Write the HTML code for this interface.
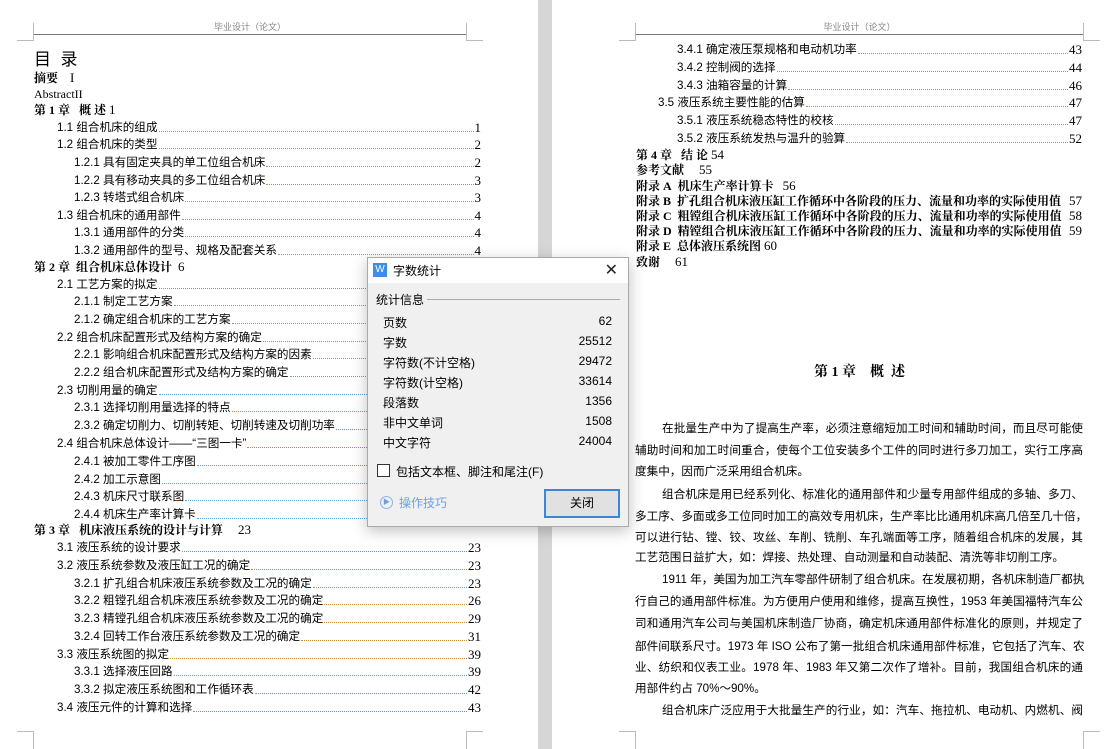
<!DOCTYPE html>
<html><head><meta charset="utf-8">
<style>
*{margin:0;padding:0;box-sizing:border-box}
body{width:1114px;height:749px;overflow:hidden;background:#fff;position:relative;font-family:"Liberation Serif","Noto Serif CJK SC","Noto Sans CJK SC",serif;color:#000}
.gap{position:absolute;left:538px;top:0;width:14px;height:749px;background:#d6d6d6}
.hd{position:absolute;top:20px;font-size:9px;color:#888;font-family:"Liberation Sans","Noto Sans CJK SC",sans-serif;text-align:center}
.hl{position:absolute;top:34px;height:1px;background:#777}
.cm{position:absolute;border-color:#bbb;border-style:solid;border-width:0}
.r{position:absolute;display:flex;align-items:flex-end;font-size:11.6px;line-height:16px;height:16px;white-space:nowrap;font-family:"Liberation Sans","Noto Sans CJK SC",sans-serif}
.r .d{flex:1;border-bottom:1px dotted #c98a3a;margin:0 1px 4px 1px}
.r .d.b{border-bottom-color:#5aa0d8}
.r .n{font-family:"Liberation Serif",serif;font-size:13px}
.c{position:absolute;font-size:12px;line-height:16px;font-weight:bold;white-space:nowrap;font-family:"Liberation Serif","Noto Serif CJK SC",serif}
.c .n{font-weight:normal;font-size:13px}
.bl{position:absolute;left:635px;width:448px;font-size:11.6px;line-height:18px;white-space:nowrap;text-align:justify;text-align-last:justify;font-family:"Liberation Sans","Noto Sans CJK SC",sans-serif}
.bl.e{text-align-last:left}
.bl.i{padding-left:27px}
.dlg{position:absolute;left:367px;top:257px;width:262px;height:270px;background:#f0f0f0;border:1px solid #aaa;box-shadow:0 4px 14px rgba(0,0,0,.25);font-family:"Liberation Sans","Noto Sans CJK SC",sans-serif;font-size:12px}
.tb{height:25px;background:#fff;position:relative}
.dr{position:absolute;left:15px;right:16px;display:flex;justify-content:space-between;font-size:12px}
</style></head><body>
<div class="gap"></div>

<div class="hd" style="left:34px;width:432px">毕业设计（论文）</div>
<div class="hl" style="left:34px;width:432px"></div>
<div class="cm" style="left:17px;top:23px;width:17px;height:18px;border-right-width:1px;border-bottom-width:1px"></div>
<div class="cm" style="left:466px;top:23px;width:17px;height:18px;border-left-width:1px;border-bottom-width:1px"></div>
<div class="cm" style="left:17px;top:731px;width:17px;height:18px;border-right-width:1px;border-top-width:1px"></div>
<div class="cm" style="left:466px;top:731px;width:17px;height:18px;border-left-width:1px;border-top-width:1px"></div>

<div style="position:absolute;left:34px;top:45px;font-size:17px;font-family:'Liberation Sans','Noto Sans CJK SC',sans-serif">目&nbsp;&nbsp;录</div>
<div class="c" style="left:34px;top:70px">摘要&nbsp;&nbsp;&nbsp;&nbsp;<span class="n">I</span></div>
<div class="c" style="left:34px;top:86px;font-weight:normal">AbstractII</div>
<div class="c" style="left:34px;top:102px">第 1 章&nbsp;&nbsp;&nbsp;概 述 <span class="n">1</span></div>

<div class="r" style="left:57px;width:424px;top:120px"><span>1.1 组合机床的组成</span><span class="d b"></span><span class="n">1</span></div>
<div class="r" style="left:57px;width:424px;top:137px"><span>1.2 组合机床的类型</span><span class="d"></span><span class="n">2</span></div>
<div class="r" style="left:74px;width:407px;top:155px"><span>1.2.1 具有固定夹具的单工位组合机床</span><span class="d b"></span><span class="n">2</span></div>
<div class="r" style="left:74px;width:407px;top:173px"><span>1.2.2 具有移动夹具的多工位组合机床</span><span class="d"></span><span class="n">3</span></div>
<div class="r" style="left:74px;width:407px;top:190px"><span>1.2.3 转塔式组合机床</span><span class="d b"></span><span class="n">3</span></div>
<div class="r" style="left:57px;width:424px;top:208px"><span>1.3 组合机床的通用部件</span><span class="d"></span><span class="n">4</span></div>
<div class="r" style="left:74px;width:407px;top:225px"><span>1.3.1 通用部件的分类</span><span class="d b"></span><span class="n">4</span></div>
<div class="r" style="left:74px;width:407px;top:243px"><span>1.3.2 通用部件的型号、规格及配套关系</span><span class="d"></span><span class="n">4</span></div>
<div class="c" style="left:34px;top:259px">第 2 章&nbsp;&nbsp;组合机床总体设计&nbsp;&nbsp;<span class="n">6</span></div>
<div class="r" style="left:57px;width:424px;top:277px"><span>2.1 工艺方案的拟定</span><span class="d b"></span><span class="n">6</span></div>
<div class="r" style="left:74px;width:407px;top:294px"><span>2.1.1 制定工艺方案</span><span class="d b"></span><span class="n">6</span></div>
<div class="r" style="left:74px;width:407px;top:312px"><span>2.1.2 确定组合机床的工艺方案</span><span class="d"></span><span class="n">6</span></div>
<div class="r" style="left:57px;width:424px;top:330px"><span>2.2 组合机床配置形式及结构方案的确定</span><span class="d"></span><span class="n">9</span></div>
<div class="r" style="left:74px;width:407px;top:347px"><span>2.2.1 影响组合机床配置形式及结构方案的因素</span><span class="d b"></span><span class="n">9</span></div>
<div class="r" style="left:74px;width:407px;top:365px"><span>2.2.2 组合机床配置形式及结构方案的确定</span><span class="d b"></span><span class="n">9</span></div>
<div class="r" style="left:57px;width:424px;top:383px"><span>2.3 切削用量的确定</span><span class="d b"></span><span class="n">12</span></div>
<div class="r" style="left:74px;width:407px;top:400px"><span>2.3.1 选择切削用量选择的特点</span><span class="d b"></span><span class="n">12</span></div>
<div class="r" style="left:74px;width:407px;top:418px"><span>2.3.2 确定切削力、切削转矩、切削转速及切削功率</span><span class="d b"></span><span class="n">13</span></div>
<div class="r" style="left:57px;width:424px;top:436px"><span>2.4 组合机床总体设计——“三图一卡”</span><span class="d"></span><span class="n">16</span></div>
<div class="r" style="left:74px;width:407px;top:454px"><span>2.4.1 被加工零件工序图</span><span class="d b"></span><span class="n">16</span></div>
<div class="r" style="left:74px;width:407px;top:472px"><span>2.4.2 加工示意图</span><span class="d b"></span><span class="n">17</span></div>
<div class="r" style="left:74px;width:407px;top:489px"><span>2.4.3 机床尺寸联系图</span><span class="d b"></span><span class="n">19</span></div>
<div class="r" style="left:74px;width:407px;top:507px"><span>2.4.4 机床生产率计算卡</span><span class="d b"></span><span class="n">21</span></div>
<div class="c" style="left:34px;top:522px">第 3 章&nbsp;&nbsp;&nbsp;机床液压系统的设计与计算&nbsp;&nbsp;&nbsp;&nbsp;&nbsp;<span class="n">23</span></div>
<div class="r" style="left:57px;width:424px;top:540px"><span>3.1 液压系统的设计要求</span><span class="d b"></span><span class="n">23</span></div>
<div class="r" style="left:57px;width:424px;top:558px"><span>3.2 液压系统参数及液压缸工况的确定</span><span class="d"></span><span class="n">23</span></div>
<div class="r" style="left:74px;width:407px;top:576px"><span>3.2.1 扩孔组合机床液压系统参数及工况的确定</span><span class="d b"></span><span class="n">23</span></div>
<div class="r" style="left:74px;width:407px;top:593px"><span>3.2.2 粗镗孔组合机床液压系统参数及工况的确定</span><span class="d"></span><span class="n">26</span></div>
<div class="r" style="left:74px;width:407px;top:611px"><span>3.2.3 精镗孔组合机床液压系统参数及工况的确定</span><span class="d"></span><span class="n">29</span></div>
<div class="r" style="left:74px;width:407px;top:629px"><span>3.2.4 回转工作台液压系统参数及工况的确定</span><span class="d"></span><span class="n">31</span></div>
<div class="r" style="left:57px;width:424px;top:647px"><span>3.3 液压系统图的拟定</span><span class="d"></span><span class="n">39</span></div>
<div class="r" style="left:74px;width:407px;top:664px"><span>3.3.1 选择液压回路</span><span class="d b"></span><span class="n">39</span></div>
<div class="r" style="left:74px;width:407px;top:682px"><span>3.3.2 拟定液压系统图和工作循环表</span><span class="d b"></span><span class="n">42</span></div>
<div class="r" style="left:57px;width:424px;top:700px"><span>3.4 液压元件的计算和选择</span><span class="d b"></span><span class="n">43</span></div>

<div class="hd" style="left:636px;width:447px">毕业设计（论文）</div>
<div class="hl" style="left:636px;width:447px"></div>
<div class="cm" style="left:619px;top:23px;width:17px;height:18px;border-right-width:1px;border-bottom-width:1px"></div>
<div class="cm" style="left:1083px;top:23px;width:17px;height:18px;border-left-width:1px;border-bottom-width:1px"></div>
<div class="cm" style="left:619px;top:731px;width:17px;height:18px;border-right-width:1px;border-top-width:1px"></div>
<div class="cm" style="left:1083px;top:731px;width:17px;height:18px;border-left-width:1px;border-top-width:1px"></div>

<div class="r" style="left:677px;width:405px;top:42px"><span>3.4.1 确定液压泵规格和电动机功率</span><span class="d"></span><span class="n">43</span></div>
<div class="r" style="left:677px;width:405px;top:60px"><span>3.4.2 控制阀的选择</span><span class="d b"></span><span class="n">44</span></div>
<div class="r" style="left:677px;width:405px;top:78px"><span>3.4.3 油箱容量的计算</span><span class="d b"></span><span class="n">46</span></div>
<div class="r" style="left:658px;width:424px;top:95px"><span>3.5 液压系统主要性能的估算</span><span class="d"></span><span class="n">47</span></div>
<div class="r" style="left:677px;width:405px;top:113px"><span>3.5.1 液压系统稳态特性的校核</span><span class="d"></span><span class="n">47</span></div>
<div class="r" style="left:677px;width:405px;top:131px"><span>3.5.2 液压系统发热与温升的验算</span><span class="d b"></span><span class="n">52</span></div>
<div class="c" style="left:636px;top:147px">第 4 章&nbsp;&nbsp;&nbsp;结 论 <span class="n">54</span></div>
<div class="c" style="left:636px;top:162px">参考文献&nbsp;&nbsp;&nbsp;&nbsp;&nbsp;<span class="n">55</span></div>
<div class="c" style="left:636px;top:178px">附录 A&nbsp;&nbsp;机床生产率计算卡&nbsp;&nbsp;&nbsp;<span class="n">56</span></div>
<div class="c" style="left:636px;top:193px;width:446px">附录 B&nbsp;&nbsp;扩孔组合机床液压缸工作循环中各阶段的压力、流量和功率的实际使用值<span class="n" style="position:absolute;right:0">57</span></div>
<div class="c" style="left:636px;top:208px;width:446px">附录 C&nbsp;&nbsp;粗镗组合机床液压缸工作循环中各阶段的压力、流量和功率的实际使用值<span class="n" style="position:absolute;right:0">58</span></div>
<div class="c" style="left:636px;top:223px;width:446px">附录 D&nbsp;&nbsp;精镗组合机床液压缸工作循环中各阶段的压力、流量和功率的实际使用值<span class="n" style="position:absolute;right:0">59</span></div>
<div class="c" style="left:636px;top:238px">附录 E&nbsp;&nbsp;总体液压系统图 <span class="n">60</span></div>
<div class="c" style="left:636px;top:254px">致谢&nbsp;&nbsp;&nbsp;&nbsp;&nbsp;<span class="n">61</span></div>

<div style="position:absolute;left:636px;width:447px;top:361px;text-align:center;font-size:14px;font-weight:bold;font-family:'Liberation Serif','Noto Serif CJK SC',serif">第 1 章&nbsp;&nbsp;&nbsp;&nbsp;概&nbsp;&nbsp;述</div>

<div class="bl i" style="top:420px">在批量生产中为了提高生产率，必须注意缩短加工时间和辅助时间，而且尽可能使</div>
<div class="bl" style="top:442px">辅助时间和加工时间重合，使每个工位安装多个工件的同时进行多刀加工，实行工序高</div>
<div class="bl e" style="top:463px">度集中，因而广泛采用组合机床。</div>
<div class="bl i" style="top:486px">组合机床是用已经系列化、标准化的通用部件和少量专用部件组成的多轴、多刀、</div>
<div class="bl" style="top:508px">多工序、多面或多工位同时加工的高效专用机床，生产率比比通用机床高几倍至几十倍，</div>
<div class="bl" style="top:529px">可以进行钻、镗、铰、攻丝、车削、铣削、车孔端面等工序，随着组合机床的发展，其</div>
<div class="bl e" style="top:549px">工艺范围日益扩大，如：焊接、热处理、自动测量和自动装配、清洗等非切削工序。</div>
<div class="bl i" style="top:571px">1911 年，美国为加工汽车零部件研制了组合机床。在发展初期，各机床制造厂都执</div>
<div class="bl" style="top:593px">行自己的通用部件标准。为方便用户使用和维修，提高互换性，1953 年美国福特汽车公</div>
<div class="bl" style="top:615px">司和通用汽车公司与美国机床制造厂协商，确定机床通用部件标准化的原则，并规定了</div>
<div class="bl" style="top:638px">部件间联系尺寸。1973 年 ISO 公布了第一批组合机床通用部件标准，它包括了汽车、农</div>
<div class="bl" style="top:659px">业、纺织和仪表工业。1978 年、1983 年又第二次作了增补。目前，我国组合机床的通</div>
<div class="bl e" style="top:680px">用部件约占 70%～90%。</div>
<div class="bl i" style="top:702px">组合机床广泛应用于大批量生产的行业，如：汽车、拖拉机、电动机、内燃机、阀</div>

<div class="dlg">
 <div class="tb">
  <div style="position:absolute;left:5px;top:5px;width:14px;height:14px;background:#3d8ee6;color:#fff;font-size:10px;line-height:14px;text-align:center">W</div>
  <div style="position:absolute;left:25px;top:4px;font-size:12px">字数统计</div>
  <div style="position:absolute;right:10px;top:2px;font-size:16px;color:#222">✕</div>
 </div>
 <div style="position:absolute;left:8px;top:33px;font-size:12px;background:#f0f0f0;padding-right:3px;z-index:1">统计信息</div>
 <div style="position:absolute;left:8px;right:8px;top:41px;height:1px;background:#aaa"></div>
 <div class="dr" style="top:56px"><span>页数</span><span>62</span></div>
 <div class="dr" style="top:76px"><span>字数</span><span>25512</span></div>
 <div class="dr" style="top:96px"><span>字符数(不计空格)</span><span>29472</span></div>
 <div class="dr" style="top:116px"><span>字符数(计空格)</span><span>33614</span></div>
 <div class="dr" style="top:136px"><span>段落数</span><span>1356</span></div>
 <div class="dr" style="top:156px"><span>非中文单词</span><span>1508</span></div>
 <div class="dr" style="top:176px"><span>中文字符</span><span>24004</span></div>
 <div style="position:absolute;left:9px;top:206px;width:13px;height:13px;border:1px solid #333;background:#fff"></div>
 <div style="position:absolute;left:28px;top:205px">包括文本框、脚注和尾注(F)</div>
 <div style="position:absolute;left:12px;top:238px;width:13px;height:13px;border:1px solid #8ab4ea;border-radius:50%;font-size:7px;color:#6a9fe4;text-align:center;line-height:11px">▶</div>
 <div style="position:absolute;left:31px;top:236px;color:#6aa2e6">操作技巧</div>
 <div style="position:absolute;left:176px;top:231px;width:76px;height:29px;border:2px solid #3b86d9;background:#e1e1e1;text-align:center;line-height:25px">关闭</div>
</div>
</body></html>
